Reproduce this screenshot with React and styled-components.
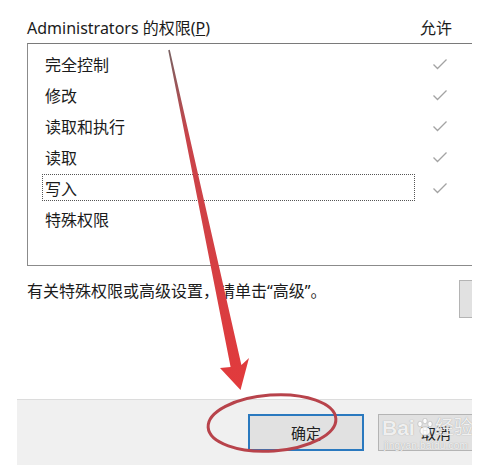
import React from 'react'
import styled, { createGlobalStyle } from 'styled-components'

const GlobalStyle = createGlobalStyle`
  html, body {
    margin: 0;
    padding: 0;
    background: #ffffff;
  }
  body {
    font-family: "Noto Sans", "Noto Sans CJK SC", sans-serif;
    color: #1b1b1b;
  }
`

const Page = styled.div`
  position: relative;
  width: 472px;
  height: 465px;
  overflow: hidden;
  font-family: "Noto Sans", "Noto Sans CJK SC", sans-serif;
`

const Top = styled.div`
  padding: 18px 0 0 27px;
`

const HeaderRow = styled.div`
  display: flex;
  justify-content: space-between;
  align-items: center;
  height: 20px;
  padding-right: 20px;
  font-size: 16px;
  line-height: 20px;
`

const Underline = styled.span`
  text-decoration: underline;
`

const ListBox = styled.div`
  margin-top: 5px;
  height: 217px;
  padding-top: 4px;
  border: 1px solid #8b8b8b;
  border-top-color: #7a7a7a;
  border-right: none;
`

const Row = styled.div`
  display: flex;
  align-items: center;
  height: 31px;
  margin-left: 14px;
`

const NameCell = styled.div`
  box-sizing: border-box;
  width: 373px;
  height: 27px;
  padding-left: 2px;
  display: flex;
  align-items: center;
  font-size: 16px;
  border: 1px dotted ${p => (p.$focused ? '#555' : 'transparent')};
`

const CheckCell = styled.div`
  width: 50px;
  display: flex;
  justify-content: center;
  align-items: center;
  color: #a3a3a3;
`

const DescRow = styled.div`
  display: flex;
  align-items: flex-start;
  margin-top: 14px;
  padding-left: 27px;
`

const DescText = styled.div`
  font-size: 16px;
  line-height: 22px;
`

const SideButton = styled.div`
  margin-left: auto;
  width: 13px;
  height: 38px;
  box-sizing: border-box;
  background: #e1e1e1;
  border: 1px solid #b4b4b4;
  border-right: none;
  flex-shrink: 0;
`

const Footer = styled.div`
  margin-top: 81px;
  margin-left: 17px;
  height: 67px;
  box-sizing: border-box;
  border-top: 1px solid #dcdcdc;
  background: #f0f0f0;
  display: flex;
  gap: 14px;
  padding: 14px 0 0 231px;
`

const Button = styled.div`
  flex-shrink: 0;
  width: 116px;
  height: 37px;
  box-sizing: border-box;
  background: #e1e1e1;
  border: ${p => (p.$primary ? '2px solid #2a79bf' : '1px solid #b4b4b4')};
  display: flex;
  align-items: center;
  justify-content: center;
  font-size: 15px;
  color: #222;
`

const Watermark = styled.div`
  position: absolute;
  left: 382px;
  top: 416px;
  width: 100px;
  color: rgba(255, 255, 255, 0.85);
  text-shadow: 0 0 1px rgba(120, 120, 120, 0.7);
  font-family: "Liberation Sans", "Noto Sans CJK SC", sans-serif;
  pointer-events: none;
`

const WmTop = styled.div`
  display: flex;
  align-items: center;
  gap: 1px;
  font-size: 21px;
  font-weight: bold;
  line-height: 24px;
`

const WmCn = styled.span`
  font-size: 19px;
  font-weight: normal;
`

const WmSub = styled.div`
  font-size: 10px;
  line-height: 12px;
  letter-spacing: 0.2px;
  margin-left: 2px;
`

const Overlay = styled.svg`
  position: absolute;
  left: 0;
  top: 0;
  pointer-events: none;
`

const Check = () => (
  <svg width="16" height="12" viewBox="0 0 16 12">
    <path d="M1.5 6.5 L5.5 10.5 L14.5 1.5" fill="none" stroke="currentColor" strokeWidth="1.3" />
  </svg>
)

const rows = [
  { name: '完全控制', allow: true },
  { name: '修改', allow: true },
  { name: '读取和执行', allow: true },
  { name: '读取', allow: true },
  { name: '写入', allow: true, focused: true },
  { name: '特殊权限', allow: false },
]

const App = () => {
  return (
    <Page>
      <GlobalStyle />
      <Top>
        <HeaderRow>
          <span>Administrators 的权限(<Underline>P</Underline>)</span>
          <span>允许</span>
        </HeaderRow>
        <ListBox>
          {rows.map(r => (
            <Row key={r.name}>
              <NameCell $focused={r.focused}>{r.name}</NameCell>
              <CheckCell>{r.allow && <Check />}</CheckCell>
            </Row>
          ))}
        </ListBox>
      </Top>
      <DescRow>
        <DescText>有关特殊权限或高级设置，请单击“高级”。</DescText>
        <SideButton />
      </DescRow>
      <Footer>
        <Button $primary>确定</Button>
        <Button>取消</Button>
      </Footer>
      <Watermark>
        <WmTop>
          <span>Bai</span>
          <svg width="18" height="20" viewBox="0 0 18 20">
            <g fill="rgba(255,255,255,0.9)" stroke="rgba(140,140,140,0.6)" strokeWidth="0.6">
              <ellipse cx="4" cy="6" rx="2.2" ry="2.8" />
              <ellipse cx="9" cy="3" rx="2.2" ry="2.8" />
              <ellipse cx="14" cy="6" rx="2.2" ry="2.8" />
              <ellipse cx="9" cy="13" rx="5" ry="4.5" />
            </g>
          </svg>
          <WmCn>经验</WmCn>
        </WmTop>
        <WmSub>jingyan.baidu.com</WmSub>
      </Watermark>
      <Overlay width="472" height="465" viewBox="0 0 472 465">
        <defs>
          <linearGradient id="shaft" x1="0" y1="50" x2="0" y2="390" gradientUnits="userSpaceOnUse">
            <stop offset="0" stopColor="#7a6262" />
            <stop offset="0.25" stopColor="#c8444a" />
            <stop offset="1" stopColor="#e23a3c" />
          </linearGradient>
        </defs>
        <polygon
          points="168.2,50.2 169.8,49.8 241.4,364.9 249,358 240.5,390 220,368 230.6,367.1"
          fill="url(#shaft)"
        />
        <ellipse
          cx="272"
          cy="423"
          rx="64"
          ry="28"
          transform="rotate(-4 272 423)"
          fill="none"
          stroke="#b8434b"
          strokeWidth="3"
        />
      </Overlay>
    </Page>
  )
}

export default App
